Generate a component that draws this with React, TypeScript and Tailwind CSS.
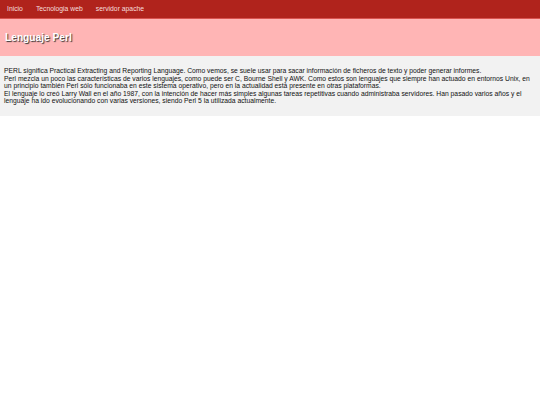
export default function App() {
  return (
    <div className="min-h-[405px] bg-white font-['Liberation_Sans',Arial,sans-serif]">
      {/* Nav */}
      <nav className="flex h-[19px] items-center gap-[13px] border-b border-[#d9534f] bg-[#b0231c] px-[7px] text-[6.8px] text-[#f6dede]">
        <a>Inicio</a>
        <a>Tecnologia web</a>
        <a>servidor apache</a>
      </nav>

      {/* Header */}
      <header className="flex h-[37px] items-center bg-[#ffb5b5] px-[5px]">
        <h1 className="text-[10.2px] font-bold text-white [text-shadow:1px_1px_1px_#333]">
          Lenguaje Perl
        </h1>
      </header>

      {/* Content */}
      <section className="bg-[#f2f2f2] px-[4px] py-[11px] text-[6.75px] leading-[7.5px] text-[#111]">
        <p>
          PERL significa Practical Extracting and Reporting Language. Como vemos, se suele usar para sacar información de ficheros de texto y poder generar informes.
          <br />
          Perl mezcla un poco las características de varios lenguajes, como puede ser C, Bourne Shell y AWK. Como estos son lenguajes que siempre han actuado en entornos Unix, en un principio también Perl sólo funcionaba en este sistema operativo, pero en la actualidad está presente en otras plataformas.
          <br />
          El lenguaje lo creó Larry Wall en el año 1987, con la intención de hacer más simples algunas tareas repetitivas cuando administraba servidores. Han pasado varios años y el lenguaje ha ido evolucionando con varias versiones, siendo Perl 5 la utilizada actualmente.
        </p>
      </section>
    </div>
  );
}
